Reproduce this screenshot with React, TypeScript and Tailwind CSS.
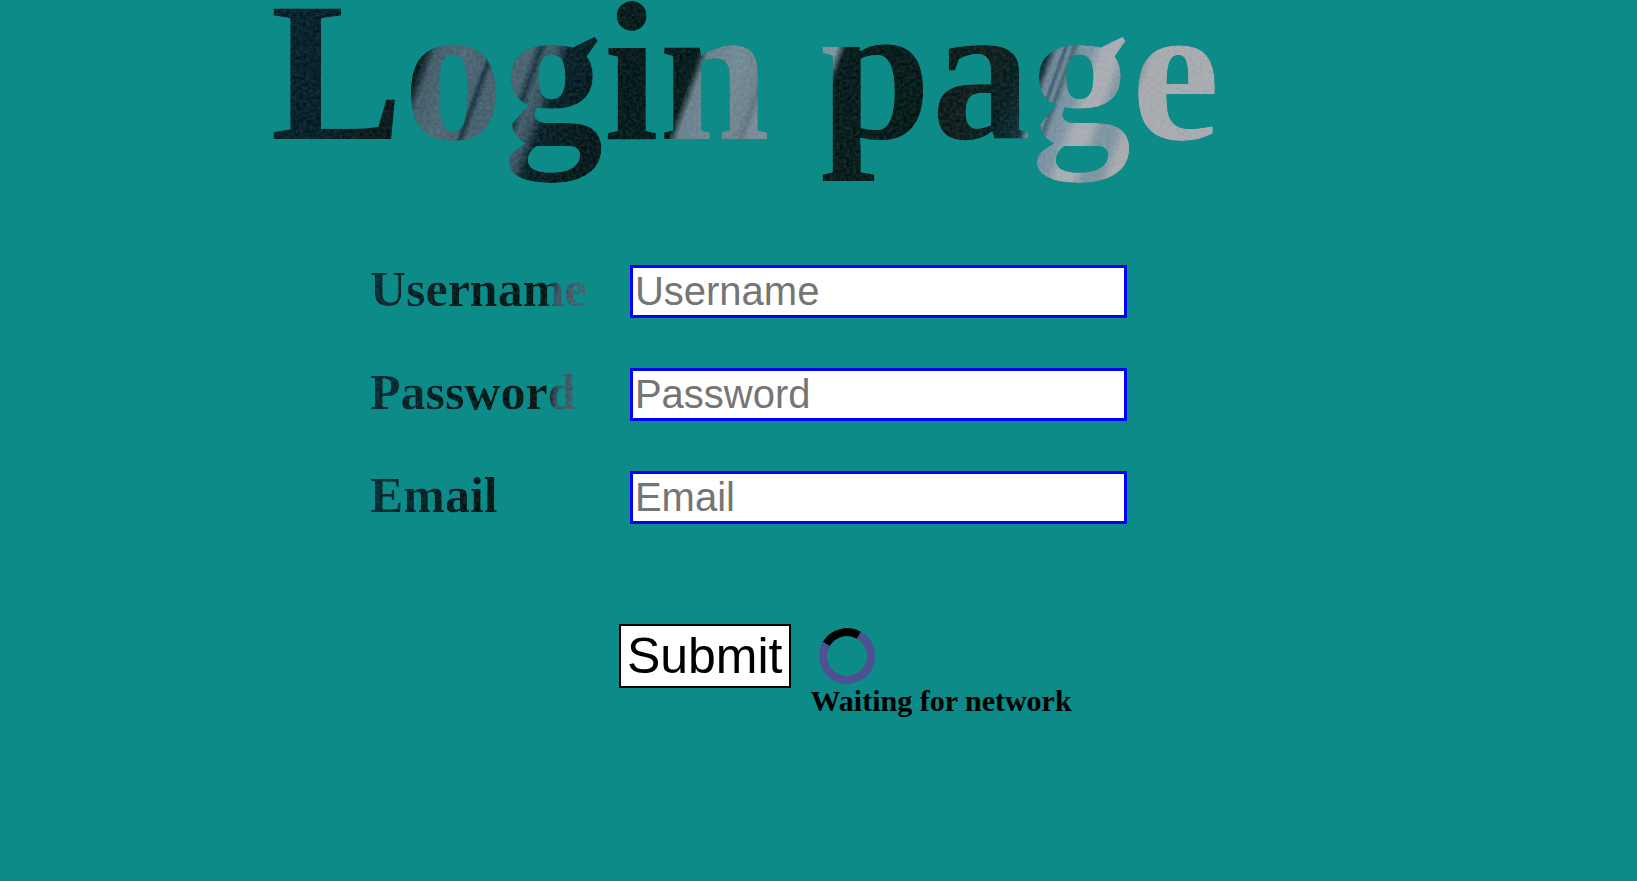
import { useState } from "react";
import type { FormEvent } from "react";

type Field = { id: string; label: string; type: string };

const fields: Field[] = [
  { id: "username", label: "Username", type: "text" },
  { id: "password", label: "Password", type: "password" },
  { id: "email", label: "Email", type: "email" },
];

/** Film-like noise laid over the textured lettering, stronger in the shadows. */
function GrainFilter() {
  return (
    <svg aria-hidden="true" className="absolute size-0">
      <filter id="grain" x="0" y="0" width="100%" height="100%" colorInterpolationFilters="sRGB">
        <feTurbulence type="fractalNoise" baseFrequency="0.3" numOctaves="3" seed="4" result="noise" />
        <feColorMatrix
          in="noise"
          type="matrix"
          values="1 0 0 0 0  1 0 0 0 0  1 0 0 0 0  0 0 0 0 1"
          result="grey"
        />
        <feComposite in="SourceGraphic" in2="grey" operator="arithmetic" k1="-0.2" k2="1.1" k3="0.2" k4="-0.1" result="mixed" />
        <feComposite in="mixed" in2="SourceAlpha" operator="in" />
      </filter>
    </svg>
  );
}

function Title() {
  return (
    <h1 className="w-fit bg-[linear-gradient(110deg,#0a252d_0px,#09232b_90px,#10201f_135px,#0a1c20_162px,#46606c_174px,#526b79_200px,#4a6371_222px,#1f3943_226px,#4a6371_232px,#4e6673_264px,#213b46_271px,#48606d_278px,#3a5260_288px,#0c262c_298px,#0a1d1f_340px,#091f1e_421px,#6b838e_430px,#758c97_460px,#70858f_484px,#637782_490px,#7c8c9c_496px,#7e96a2_549px,#0b1f20_558px,#091e1c_650px,#152220_690px,#0b2324_725px,#16343b_750px,#6f8896_757px,#71899a_761px,#435e6e_764px,#758e9c_768px,#4a6575_772px,#7891a0_777px,#8298a6_790px,#a5adb4_800px,#abaeb2_814px,#7f96a4_826px,#8297a4_840px,#a8abaf_850px)] bg-clip-text pb-11 text-[200px] leading-[144px] font-bold text-transparent [filter:url(#grain)]">
      Login page
    </h1>
  );
}

function FieldRow({ id, label, type }: Field) {
  return (
    <div className="flex items-start">
      <div className="w-[260px] shrink-0">
        <label
          htmlFor={id}
          className="block w-fit bg-[linear-gradient(100deg,#0e3038_0px,#0b262c_50px,#081c1c_100px,#081c1b_178px,#3d5966_190px,#4b6471_220px)] bg-clip-text pb-1 text-[50px] leading-[48px] font-bold text-transparent [filter:url(#grain)]"
        >
          {label}
        </label>
      </div>
      <input
        id={id}
        name={id}
        type={type}
        placeholder={label}
        className="w-[497px] min-w-0 border-3 border-[#0000ff] bg-white px-0.5 py-px font-['Liberation_Sans',Arial,sans-serif] text-[40px] leading-[45px] text-black placeholder:text-[#757575]"
      />
    </div>
  );
}

export default function App() {
  const [status, setStatus] = useState("Waiting for network");

  const submit = (event: FormEvent) => {
    event.preventDefault();
    setStatus("Waiting for network");
  };

  return (
    <main className="min-h-screen bg-[#0c8b88] pr-[147px] font-['Liberation_Serif','Times_New_Roman',serif] text-black">
      <GrainFilter />
      <div className="mx-auto w-fit">
        <Title />
        <form onSubmit={submit} className="mt-[77px]">
          <div className="flex flex-col gap-[50px] pl-[100px]">
            {fields.map((field) => (
              <FieldRow key={field.id} {...field} />
            ))}
          </div>
          <div className="mt-[100px] flex items-start gap-5 pl-[349px]">
            <button
              type="submit"
              className="border-2 border-black bg-white px-1.5 py-px font-['Liberation_Sans',Arial,sans-serif] text-[50px] leading-[58px]"
            >
              Submit
            </button>
            <div role="status" className="pt-1">
              <div className="ml-2 size-14 -rotate-15 rounded-full border-8 border-[#4f4f94] border-t-black" />
              <p className="text-[30px] leading-[34px] font-bold">{status}</p>
            </div>
          </div>
        </form>
      </div>
    </main>
  );
}
